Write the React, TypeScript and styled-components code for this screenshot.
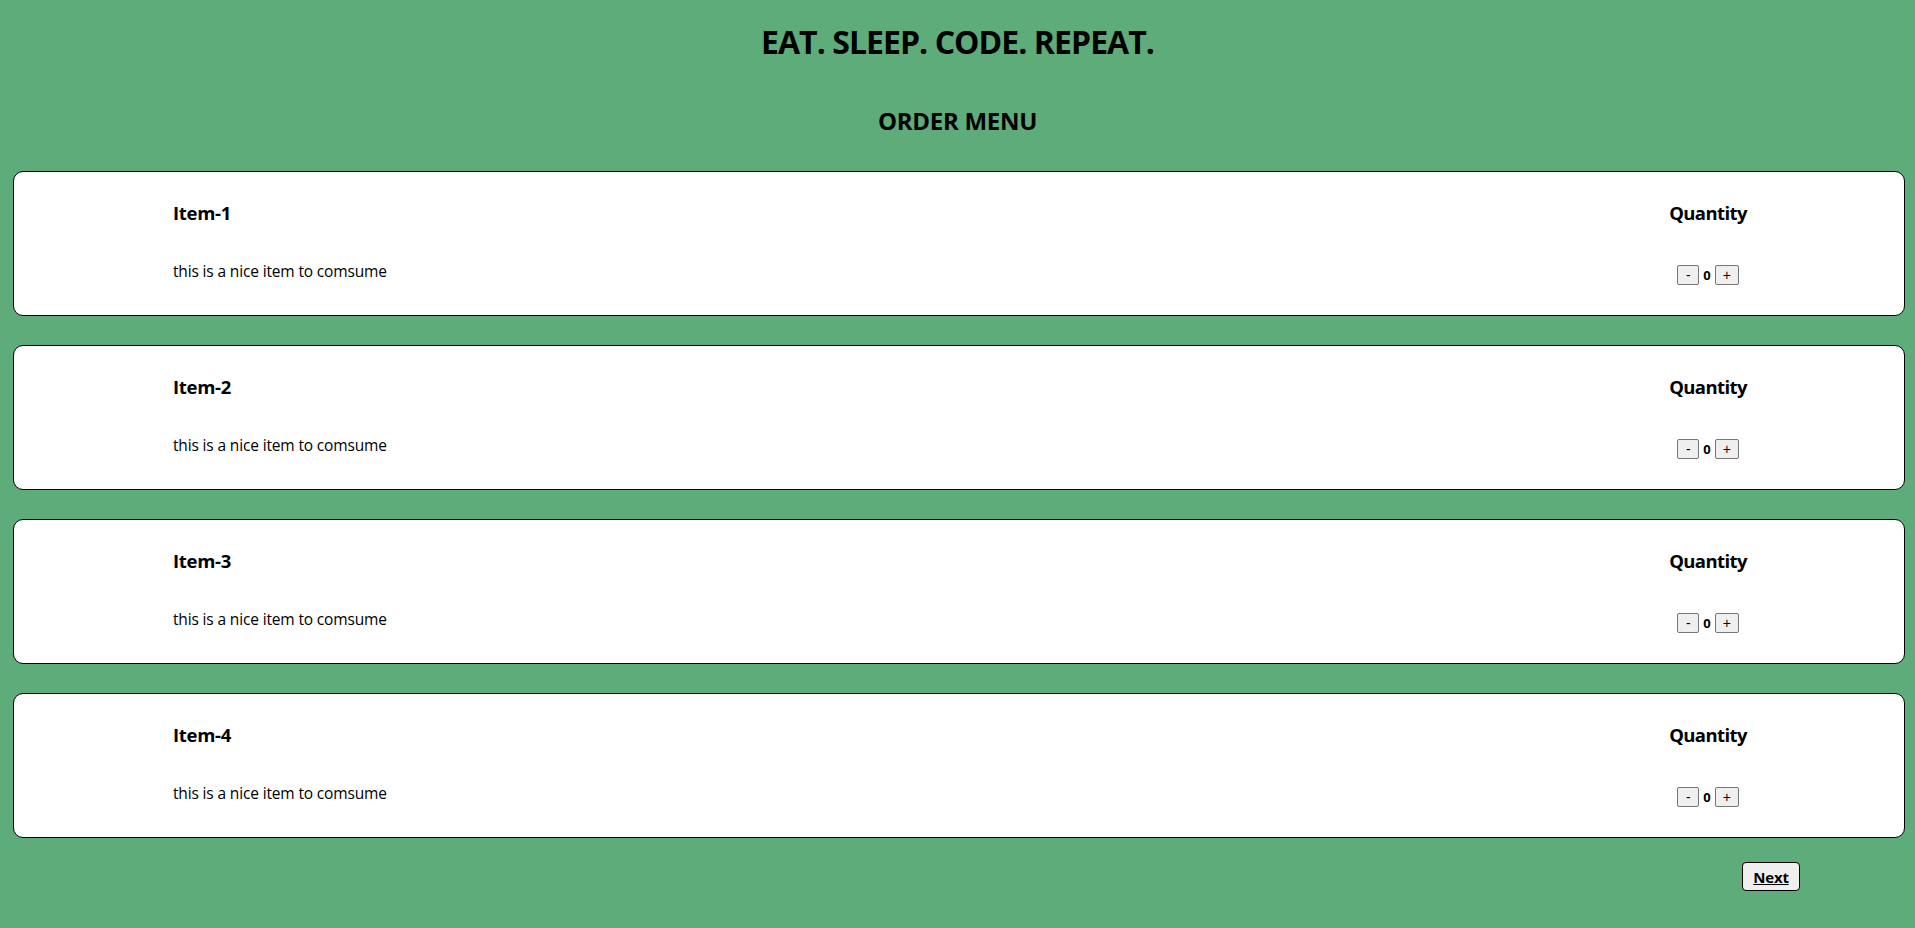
import React, { useState } from "react";
import styled, { createGlobalStyle } from "styled-components";

const GlobalStyle = createGlobalStyle`
  html, body {
    background: #5eac79;
  }
  body {
    margin: 8px;
    font-family: "Open Sans", "Noto Sans", sans-serif;
    color: #000;
  }
`;

const Page = styled.div`
  display: flex;
  flex-direction: column;
`;

const Title = styled.h1`
  margin: 14px 0 0;
  font-size: 32px;
  line-height: 40px;
  font-weight: 700;
  text-align: center;
  letter-spacing: -0.95px;
`;

const SubTitle = styled.h2`
  margin: 44px 0 0;
  font-size: 24px;
  line-height: 30px;
  font-weight: 700;
  text-align: center;
  letter-spacing: -0.3px;
`;

const List = styled.div`
  display: flex;
  flex-direction: column;
  gap: 29px;
  margin: 35px 2px 0 5px;
`;

const Card = styled.div`
  box-sizing: border-box;
  height: 145px;
  background: #fff;
  border: 1px solid #000;
  border-radius: 10px;
  display: flex;
  justify-content: space-between;
  align-items: flex-start;
  padding: 29px 146px 0 159px;
`;

const Info = styled.div`
  display: flex;
  flex-direction: column;
`;

const ItemName = styled.h3`
  margin: 0;
  font-size: 18.5px;
  line-height: 24px;
  font-weight: 700;
  letter-spacing: -0.3px;
`;

const Description = styled.p`
  margin: 35px 0 0;
  font-size: 15.5px;
  line-height: 22px;
  letter-spacing: -0.15px;
`;

const QtyColumn = styled.div`
  width: 100px;
  display: flex;
  flex-direction: column;
  align-items: center;
`;

const QtyLabel = styled.h3`
  margin: 0;
  font-size: 18.5px;
  line-height: 24px;
  font-weight: 700;
  letter-spacing: -0.6px;
`;

const Stepper = styled.div`
  margin-top: 40px;
  display: flex;
  align-items: center;
  gap: 4px;
`;

const StepButton = styled.button<{ $w: number }>`
  box-sizing: border-box;
  width: ${(p) => p.$w}px;
  height: 20px;
  padding: 0;
  background: #efefef;
  border: 1px solid #767676;
  border-radius: 2px;
  font-family: "Liberation Sans", Arial, sans-serif;
  font-size: 14px;
  line-height: 18px;
  color: #000;
  cursor: pointer;
`;

const Count = styled.span`
  font-size: 13px;
  font-weight: 700;
  line-height: 20px;
`;

const Footer = styled.div`
  display: flex;
  justify-content: flex-end;
  margin-top: 24px;
  padding-right: 107px;
`;

const NextButton = styled.button`
  box-sizing: border-box;
  width: 58px;
  height: 29px;
  padding: 0;
  background: #efefef;
  border: 1px solid #000;
  border-radius: 4px;
  font-family: "Open Sans", "Noto Sans", sans-serif;
  font-size: 15px;
  font-weight: 700;
  text-decoration: underline;
  color: #000;
  letter-spacing: -0.2px;
  cursor: pointer;
`;

const items = [1, 2, 3, 4].map((n) => ({
  id: n,
  name: `Item-${n}`,
  description: "this is a nice item to comsume",
}));

export default function App() {
  const [qty, setQty] = useState<Record<number, number>>({});
  const change = (id: number, d: number) =>
    setQty((q) => ({ ...q, [id]: Math.max(0, (q[id] || 0) + d) }));

  return (
    <Page>
      <GlobalStyle />
      <Title>EAT. SLEEP. CODE. REPEAT.</Title>
      <SubTitle>ORDER MENU</SubTitle>
      <List>
        {items.map((it) => (
          <Card key={it.id}>
            <Info>
              <ItemName>{it.name}</ItemName>
              <Description>{it.description}</Description>
            </Info>
            <QtyColumn>
              <QtyLabel>Quantity</QtyLabel>
              <Stepper>
                <StepButton $w={22} onClick={() => change(it.id, -1)}>
                  -
                </StepButton>
                <Count>{qty[it.id] || 0}</Count>
                <StepButton $w={24} onClick={() => change(it.id, 1)}>
                  +
                </StepButton>
              </Stepper>
            </QtyColumn>
          </Card>
        ))}
      </List>
      <Footer>
        <NextButton>Next</NextButton>
      </Footer>
    </Page>
  );
}
